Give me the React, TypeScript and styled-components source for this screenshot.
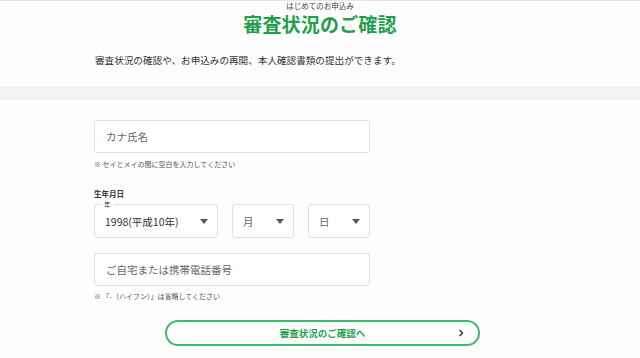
import styled, { createGlobalStyle } from "styled-components";

const GlobalStyle = createGlobalStyle`
  html, body {
    margin: 0;
    padding: 0;
    background: #fdfdfd;
    font-family: "Noto Sans CJK JP", "Noto Sans", sans-serif;
    color: #333333;
  }
`;

const Page = styled.div`
  width: 640px;
  height: 358px;
  overflow: hidden;
  border-top: 1px solid #e6e6e6;
  box-sizing: border-box;
`;

const Header = styled.header`
  display: flex;
  flex-direction: column;
  align-items: center;
`;

const SubTitle = styled.div`
  margin-top: 0;
  font-size: 7.5px;
  line-height: 10px;
  color: #444444;
`;

const Title = styled.h1`
  margin: 2px 0 0;
  font-size: 19px;
  line-height: 22px;
  font-weight: 700;
  color: #1f9f4c;
  letter-spacing: 0.01em;
`;

const Lead = styled.p`
  margin: 18px 0 0 95px;
  font-size: 9.6px;
  line-height: 14px;
  color: #333333;
`;

const Band = styled.div`
  margin-top: 19px;
  height: 14px;
  background: #f3f3f3;
`;

const Form = styled.form`
  display: flex;
  flex-direction: column;
  padding: 20px 0 0 94px;
  width: 276px;
`;

const TextBox = styled.div`
  height: 33px;
  box-sizing: border-box;
  border: 1px solid #e0e0e0;
  border-radius: 3px;
  background: #ffffff;
  display: flex;
  align-items: center;
  padding-left: 11px;
  font-size: 10.5px;
  color: #666666;
`;

const Note = styled.div<{ $gap?: number }>`
  margin-top: ${(p) => p.$gap ?? 6}px;
  font-size: 7px;
  line-height: 10px;
  color: #555555;
`;

const Label = styled.div`
  margin-top: 20px;
  font-size: 7.5px;
  line-height: 10px;
  font-weight: 700;
  color: #333333;
`;

const SelectRow = styled.div`
  display: flex;
  gap: 14px;
  margin-top: 5px;
`;

const Select = styled.div<{ $width: number }>`
  position: relative;
  width: ${(p) => p.$width}px;
  height: 34px;
  box-sizing: border-box;
  border: 1px solid #e0e0e0;
  border-radius: 3px;
  background: #ffffff;
  display: flex;
  align-items: center;
  justify-content: space-between;
  padding: 0 9px 0 10px;
  font-size: 10.5px;
  color: #333333;
`;

const Legend = styled.span`
  position: absolute;
  top: -6px;
  left: 6px;
  padding: 0 3px;
  background: #ffffff;
  font-size: 6.5px;
  line-height: 10px;
  color: #333333;
`;

const Caret = styled.span`
  width: 0;
  height: 0;
  border-left: 4.5px solid transparent;
  border-right: 4.5px solid transparent;
  border-top: 5px solid #555555;
`;

const Muted = styled.span`
  color: #666666;
`;

const PhoneBox = styled(TextBox)`
  margin-top: 15px;
`;

const SubmitButton = styled.button`
  margin: 19px 0 0 165px;
  width: 315px;
  height: 26px;
  box-sizing: border-box;
  border: 2px solid #3dbb6c;
  border-radius: 13px;
  background: #ffffff;
  display: flex;
  align-items: center;
  justify-content: center;
  position: relative;
  font-family: inherit;
  font-size: 9.5px;
  font-weight: 700;
  color: #1f9f4c;
  padding: 0;
`;

const Chevron = styled.svg`
  position: absolute;
  right: 14px;
  top: 50%;
  transform: translateY(-50%);
`;

export default function App() {
  return (
    <>
      <GlobalStyle />
      <Page>
        <Header>
          <SubTitle>はじめてのお申込み</SubTitle>
          <Title>審査状況のご確認</Title>
        </Header>
        <Lead>審査状況の確認や、お申込みの再開、本人確認書類の提出ができます。</Lead>
        <Band />
        <Form>
          <TextBox>カナ氏名</TextBox>
          <Note>※ セイとメイの間に空白を入力してください</Note>
          <Label>生年月日</Label>
          <SelectRow>
            <Select $width={124}>
              <Legend>年</Legend>
              <span>1998(平成10年)</span>
              <Caret />
            </Select>
            <Select $width={62}>
              <Muted>月</Muted>
              <Caret />
            </Select>
            <Select $width={62}>
              <Muted>日</Muted>
              <Caret />
            </Select>
          </SelectRow>
          <PhoneBox>ご自宅または携帯電話番号</PhoneBox>
          <Note $gap={5}>※ 「-（ハイフン）」は省略してください</Note>
        </Form>
        <SubmitButton type="button">
          審査状況のご確認へ
          <Chevron width="6" height="8" viewBox="0 0 6 8">
            <path d="M1.5 1 L4.5 4 L1.5 7" fill="none" stroke="#333" strokeWidth="1.4" />
          </Chevron>
        </SubmitButton>
      </Page>
    </>
  );
}
